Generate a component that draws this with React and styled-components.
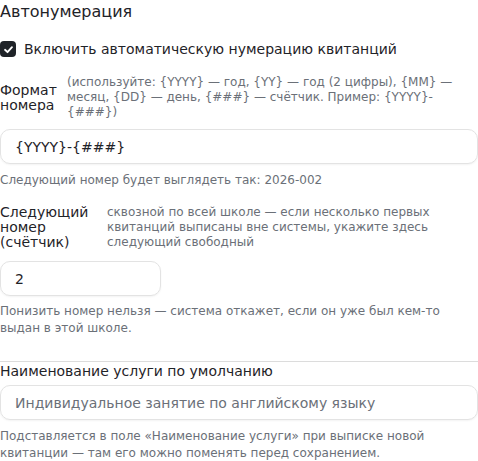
import React from "react";
import styled, { createGlobalStyle } from "styled-components";

const GlobalStyle = createGlobalStyle`
  body {
    margin: 0;
    background: #ffffff;
    font-family: "DejaVu Sans", "Liberation Sans", sans-serif;
    color: #1f2328;
  }
`;

const Section = styled.section`
  display: flex;
  flex-direction: column;
  width: 478px;
`;

const Title = styled.h3`
  margin: 0;
  font-size: 16px;
  font-weight: 400;
  line-height: 24px;
`;

const CheckRow = styled.label`
  display: flex;
  align-items: center;
  gap: 8px;
  margin-top: 16px;
  font-size: 14px;
  line-height: 18px;
`;

const Box = styled.span`
  display: flex;
  align-items: center;
  justify-content: center;
  width: 16px;
  height: 16px;
  border-radius: 4px;
  background: #1f2328;
  flex-shrink: 0;
`;

const FieldRow = styled.div`
  display: flex;
  align-items: center;
  gap: 10px;
  margin-top: ${(p) => p.$top || 0}px;
`;

const FieldLabel = styled.span`
  width: ${(p) => p.$width}px;
  flex-shrink: 0;
  font-size: 14px;
  line-height: 15px;
`;

const Hint = styled.span`
  flex: 1;
  font-size: 12px;
  line-height: 15px;
  color: #6b7078;
`;

const Input = styled.div`
  box-sizing: border-box;
  width: ${(p) => p.$width || "100%"};
  height: 35px;
  display: flex;
  align-items: center;
  padding: 0 14px;
  margin-top: ${(p) => p.$top || 0}px;
  border: 1px solid #e3e3e3;
  border-radius: 10px;
  box-shadow: 0 1px 2px rgba(0, 0, 0, 0.05);
  font-size: 14px;
  color: ${(p) => (p.$placeholder ? "#6b7078" : "#1f2328")};
`;

const Help = styled.p`
  margin: ${(p) => p.$top || 0}px 0 0;
  font-size: 12px;
  line-height: 17px;
  color: #6b7078;
`;

const Divider = styled.hr`
  border: none;
  border-top: 1px solid #dcdcdc;
  margin: 24px 0 0;
  width: 100%;
`;

const SubTitle = styled.div`
  font-size: 14px;
  line-height: 18px;
`;

export default function App() {
  return (
    <>
      <GlobalStyle />
      <Section>
        <Title>Автонумерация</Title>
        <CheckRow>
          <Box>
            <svg width="11" height="11" viewBox="0 0 12 12">
              <path
                d="M2.2 6.3 L4.9 8.9 L9.8 3.4"
                fill="none"
                stroke="#fff"
                strokeWidth="2"
                strokeLinecap="round"
                strokeLinejoin="round"
              />
            </svg>
          </Box>
          Включить автоматическую нумерацию квитанций
        </CheckRow>
        <FieldRow $top={17}>
          <FieldLabel $width={57}>Формат номера</FieldLabel>
          <Hint>
            (используйте: {"{YYYY}"} — год, {"{YY}"} — год (2 цифры), {"{MM}"} — месяц,{" "}
            {"{DD}"} — день, {"{###}"} — счётчик. Пример: {"{YYYY}-{###}"})
          </Hint>
        </FieldRow>
        <Input $top={9}>{"{YYYY}-{###}"}</Input>
        <Help $top={8}>Следующий номер будет выглядеть так: 2026-002</Help>
        <FieldRow $top={16}>
          <FieldLabel $width={97}>Следующий номер (счётчик)</FieldLabel>
          <Hint>
            сквозной по всей школе — если несколько первых квитанций выписаны вне системы, укажите здесь следующий свободный
          </Hint>
        </FieldRow>
        <Input $top={11} $width="161px">2</Input>
        <Help $top={7}>
          Понизить номер нельзя — система откажет, если он уже был кем-то выдан в этой школе.
        </Help>
        <Divider />
        <SubTitle>Наименование услуги по умолчанию</SubTitle>
        <Input $top={5} $placeholder>Индивидуальное занятие по английскому языку</Input>
        <Help $top={8}>
          Подставляется в поле «Наименование услуги» при выписке новой квитанции — там его можно поменять перед сохранением.
        </Help>
      </Section>
    </>
  );
}
